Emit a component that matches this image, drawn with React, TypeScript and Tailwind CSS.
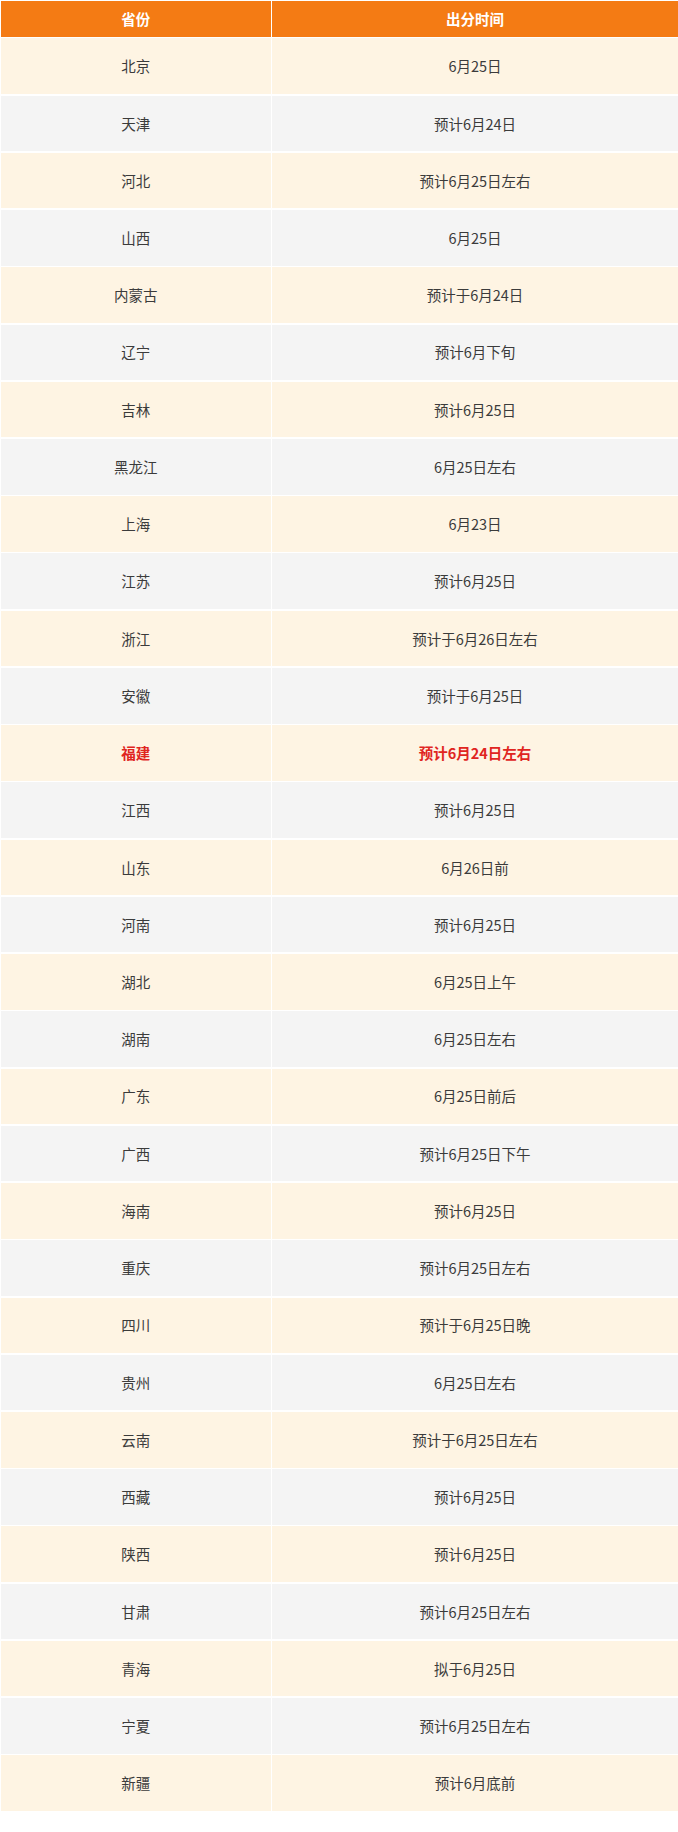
const rows: [string, string][] = [
  ['北京', '6月25日'],
  ['天津', '预计6月24日'],
  ['河北', '预计6月25日左右'],
  ['山西', '6月25日'],
  ['内蒙古', '预计于6月24日'],
  ['辽宁', '预计6月下旬'],
  ['吉林', '预计6月25日'],
  ['黑龙江', '6月25日左右'],
  ['上海', '6月23日'],
  ['江苏', '预计6月25日'],
  ['浙江', '预计于6月26日左右'],
  ['安徽', '预计于6月25日'],
  ['福建', '预计6月24日左右'],
  ['江西', '预计6月25日'],
  ['山东', '6月26日前'],
  ['河南', '预计6月25日'],
  ['湖北', '6月25日上午'],
  ['湖南', '6月25日左右'],
  ['广东', '6月25日前后'],
  ['广西', '预计6月25日下午'],
  ['海南', '预计6月25日'],
  ['重庆', '预计6月25日左右'],
  ['四川', '预计于6月25日晚'],
  ['贵州', '6月25日左右'],
  ['云南', '预计于6月25日左右'],
  ['西藏', '预计6月25日'],
  ['陕西', '预计6月25日'],
  ['甘肃', '预计6月25日左右'],
  ['青海', '拟于6月25日'],
  ['宁夏', '预计6月25日左右'],
  ['新疆', '预计6月底前'],
];

export default function App() {
  return (
    <div className="w-[678px] min-h-[1832px] bg-white pt-px pl-px font-['Microsoft_YaHei','Noto_Sans_CJK_SC',sans-serif] text-[14.5px]">
      <div className="flex flex-col gap-[1.7px]">
        {/* header */}
        <div className="flex h-[35.7px] gap-[1.5px]">
          <div className="w-[269.5px] bg-[#f47b14] flex items-center justify-center text-white font-bold">省份</div>
          <div className="flex-1 bg-[#f47b14] flex items-center justify-center text-white font-bold">出分时间</div>
        </div>
        {rows.map(([prov, time], i) => {
          const bg = i % 2 === 0 ? 'bg-[#fef4e3]' : 'bg-[#f4f4f4]';
          const hl = prov === '福建';
          const txt = hl ? 'text-[#e0251f] font-bold' : 'text-[#3b3b3b]';
          return (
            <div key={prov} className="flex h-[55.55px] gap-[1.5px]">
              <div className={`w-[269.5px] flex items-center justify-center ${bg} ${txt}`}>{prov}</div>
              <div className={`flex-1 flex items-center justify-center ${bg} ${txt}`}>{time}</div>
            </div>
          );
        })}
      </div>
    </div>
  );
}
